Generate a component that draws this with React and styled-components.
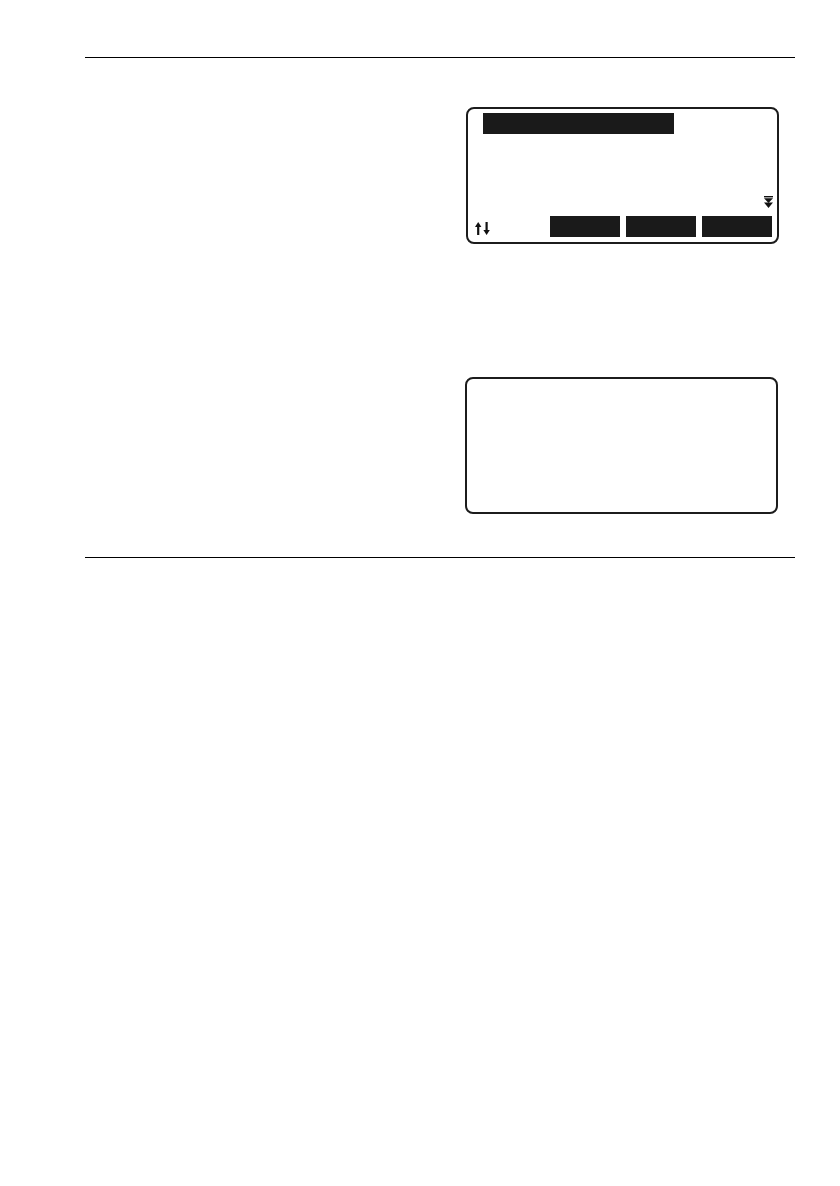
import React from 'react'
import styled, { createGlobalStyle } from 'styled-components'

const GlobalStyle = createGlobalStyle`
  html, body {
    margin: 0;
    padding: 0;
    background: #fff;
  }

  body {
    font-family: 'Liberation Sans', Arial, sans-serif;
    color: #111;
  }
`

const Page = styled.div`
  width: 840px;
  min-height: 1186px;
  box-sizing: border-box;
  padding: 57px 45px 0 85px;
`

const Rule = styled.hr`
  margin: 0;
  border: none;
  border-top: 1.5px solid #000;
  width: 710px;
`

const Section = styled.section`
  display: flex;
  flex-direction: column;
  align-items: flex-end;
  padding: ${props => props.pad || '0'};
  width: 710px;
  box-sizing: border-box;
`

const Screen = styled.div`
  box-sizing: border-box;
  width: 313px;
  height: 137px;
  border: 2px solid #1c1c1c;
  border-radius: 8px;
  display: flex;
  flex-direction: column;
  padding: 4px 5px 5px 7px;
  margin-right: ${props => props.right || 16}px;
  margin-top: ${props => props.top || 0}px;
`

const Highlight = styled.div`
  width: 191px;
  height: 21px;
  background: #1a1a1a;
  margin-left: 8px;
`

const Spacer = styled.div`
  flex: 1;
`

const IndicatorRow = styled.div`
  display: flex;
  justify-content: flex-end;
  margin-bottom: 8px;
  margin-right: -1px;
`

const SoftkeyRow = styled.div`
  display: flex;
  align-items: flex-end;
  gap: 6px;
`

const ScrollIcon = styled.div`
  display: flex;
  align-items: center;
  height: 21px;
  padding-top: 3px;
  margin-right: auto;
  box-sizing: border-box;
`

const Softkey = styled.div`
  width: 70px;
  height: 21px;
  background: #1a1a1a;
`

const UpDownArrows = () => (
  <svg width="15" height="13" viewBox="0 0 15 13">
    <line x1="3.2" y1="3" x2="3.2" y2="13" stroke="#111" strokeWidth="2.2" />
    <polygon points="0,5 3.2,0 6.4,5" fill="#111" />
    <line x1="11.6" y1="0" x2="11.6" y2="10" stroke="#111" strokeWidth="2.2" />
    <polygon points="8.4,8 11.6,13 14.8,8" fill="#111" />
  </svg>
)

const MoreDown = () => (
  <svg width="9" height="12" viewBox="0 0 9 12">
    <rect x="0" y="0" width="9" height="1.4" fill="#111" />
    <polygon points="0,2.2 9,2.2 4.5,7" fill="#111" />
    <polygon points="0,6.6 9,6.6 4.5,12" fill="#111" />
  </svg>
)

const App = () => (
  <>
    <GlobalStyle />
    <Page>
      <Rule />
      <Section pad="49px 0 0 0">
        <Screen right={16}>
          <Highlight />
          <Spacer />
          <IndicatorRow>
            <MoreDown />
          </IndicatorRow>
          <SoftkeyRow>
            <ScrollIcon>
              <UpDownArrows />
            </ScrollIcon>
            <Softkey />
            <Softkey />
            <Softkey />
          </SoftkeyRow>
        </Screen>
        <Screen right={17} top={133} />
      </Section>
      <Section pad="43px 0 0 0">
        <Rule />
      </Section>
    </Page>
  </>
)

export default App
